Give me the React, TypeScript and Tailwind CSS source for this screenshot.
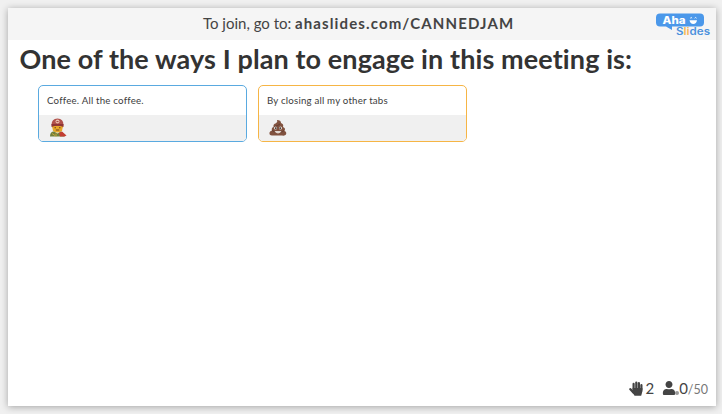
import React from "react";
import { FaUser } from "react-icons/fa";

function Logo() {
  return (
    <svg width="56" height="26" viewBox="0 0 56 26" role="img" aria-label="AhaSlides">
      <path d="M4 1.5H44Q48 1.5 48 5.5V10.5Q48 14.5 44 14.5H16V18L10 14.5H4Q0 14.5 0 10.5V5.5Q0 1.5 4 1.5Z" fill="#4b98ea" />
      <text x="6.5" y="11.6" fontFamily="Inter, sans-serif" fontWeight="800" fontSize="10" textLength="23" lengthAdjust="spacingAndGlyphs" fill="#fff">Aha</text>
      <path d="M33.5 8.3H41Q40.5 12 37.3 12T33.5 8.3Z" fill="#fff" />
      <path d="M34.3 6.2Q35.2 4.8 36.1 6.2M38.7 6.2Q39.6 4.8 40.5 6.2" fill="none" stroke="#fff" strokeWidth="1" />
      <text x="20" y="22.8" fontFamily="Inter, sans-serif" fontWeight="600" fontSize="9.8" textLength="34" lengthAdjust="spacingAndGlyphs" fill="#4b91dd">
        S<tspan fill="#f5b756">li</tspan>des
      </text>
    </svg>
  );
}

function Hand() {
  return (
    <svg width="14" height="15" viewBox="0 0 14 15" fill="none" stroke="currentColor" strokeLinecap="round">
      <path d="M4.6 8V2.9M7.3 8V1.5M9.9 8V2.2M12.4 9V4.2" strokeWidth="2.2" />
      <path d="M1.4 8.2L4.6 11.6" strokeWidth="2.3" />
      <path d="M3.6 7H13.4V10.2L12.2 14.8H5.6L3.4 11.6Z" fill="currentColor" stroke="none" />
    </svg>
  );
}

function Hero() {
  return (
    <svg width="18" height="20" viewBox="0 0 18 20" className="-mt-px">
      <path d="M2.5 7Q2.5 .5 8.5 .5T14.5 7L13 10H4Z" fill="#b0504a" />
      <path d="M3 8H14L13 13Q8.5 16 4 13Z" fill="#e7a728" />
      <path d="M2.5 6H14.5V9Q8.5 6.5 2.5 9Z" fill="#8e3434" />
      <circle cx="8.5" cy="3.6" r="2" fill="#e9beab" />
      <path d="M7.5 3.6H9.5" stroke="#a13b38" />
      <path d="M5.5 9.8H7M10 9.8H11.5M6.8 12H10.2" stroke="#70431f" strokeWidth="1.1" />
      <path d="M1 18.5Q1 13.5 5 13.5L8.5 15.5L12 13.5Q15 14.5 15.5 18.5Z" fill="#71813b" />
      <path d="M10 15L13 13.5L17.5 17.5L15.5 18.5H11Z" fill="#c33d32" />
      <path d="M3 15.5L6 17.5M7 15.5V18.5" stroke="#c9a43d" strokeWidth="1" />
    </svg>
  );
}

function Poo() {
  return (
    <svg width="18" height="17" viewBox="0 0 18 17" className="-mt-[2px]">
      <path d="M8 1Q12 1 12 4Q15 5 14 8Q17 9 15.5 12Q18 13 17 15.5Q16 17 13 16.5H3Q0 16.5 .5 13.5Q1 12 3 11.5Q2 9 4.5 8Q4 5 7 4.3Q9 3 8 1Z" fill="#81523f" />
      <path d="M5 7.5Q9 7 11 5M3 11.5Q5 13 8 13M11 13Q14 13 15 11.5" fill="none" stroke="#573429" strokeWidth=".7" />
      <circle cx="6.5" cy="9" r="1.6" fill="#e4dcd6" />
      <circle cx="11.5" cy="9" r="1.6" fill="#e4dcd6" />
      <circle cx="6.8" cy="9.1" r=".9" fill="#332a28" />
      <circle cx="11.2" cy="9.1" r=".9" fill="#332a28" />
      <path d="M5.5 12H12.5Q11.5 14.4 9 14.4T5.5 12Z" fill="#e2d7d0" />
    </svg>
  );
}

function Card({ text, border, children }: { text: string; border: string; children: React.ReactNode }) {
  return (
    <article className={`h-[57px] w-[209px] rounded-[5px] border-[1.5px] bg-white ${border}`}>
      <p className="h-[29px] whitespace-nowrap pl-[8.5px] pt-[7px] text-[9.7px] leading-[14px] tracking-[0.2px] text-[#3c3c3c]">{text}</p>
      <div className="flex h-[26px] items-center rounded-b-[4px] bg-[#f0f0f0] pl-[10px]">{children}</div>
    </article>
  );
}

export default function App() {
  return (
    <div className="h-[414px] w-[722px] overflow-hidden bg-[#f0f0f0] p-2 font-['Lato',sans-serif] text-[#333] [font-variant-ligatures:none]">
      <main className="flex h-[398px] w-[708px] flex-col bg-white shadow-[0_1px_7px_rgba(0,0,0,0.32)]">
        <header className="flex h-8 shrink-0 bg-[#f5f5f5]">
          <p className="w-[648px] whitespace-nowrap pl-[195px] pt-[4px] text-[15px] leading-[22px] text-[#444]">
            <span className="inline-block w-[92px]">To join, go to:</span>
            <strong className="tracking-[1.12px]">ahaslides.com/CANNEDJAM</strong>
          </p>
          <div className="pt-1"><Logo /></div>
        </header>
        <h1 className="h-[45px] whitespace-nowrap pl-[11.5px] pt-px text-[27px] font-bold leading-9 tracking-[0.1px]">
          One of the ways I plan to engage in this meeting is:
        </h1>
        <section className="flex gap-[11px] pl-[29.5px]">
          <Card text="Coffee. All the coffee." border="border-[#5aaae0]"><Hero /></Card>
          <Card text="By closing all my other tabs" border="border-[#f6b545]"><Poo /></Card>
        </section>
        <footer className="mt-auto flex h-9 items-center justify-end pr-[8px] text-[#444]">
          <Hand />
          <span className="ml-[2px] text-[15px]">2</span>
          <span className="ml-[8px] flex items-end"><FaUser size={14} /><i className="-ml-px size-[4px] rounded-full bg-[#999]" /></span>
          <span className="text-[15px]">0<span className="text-[12.5px] text-[#777]">/50</span></span>
        </footer>
      </main>
    </div>
  );
}
